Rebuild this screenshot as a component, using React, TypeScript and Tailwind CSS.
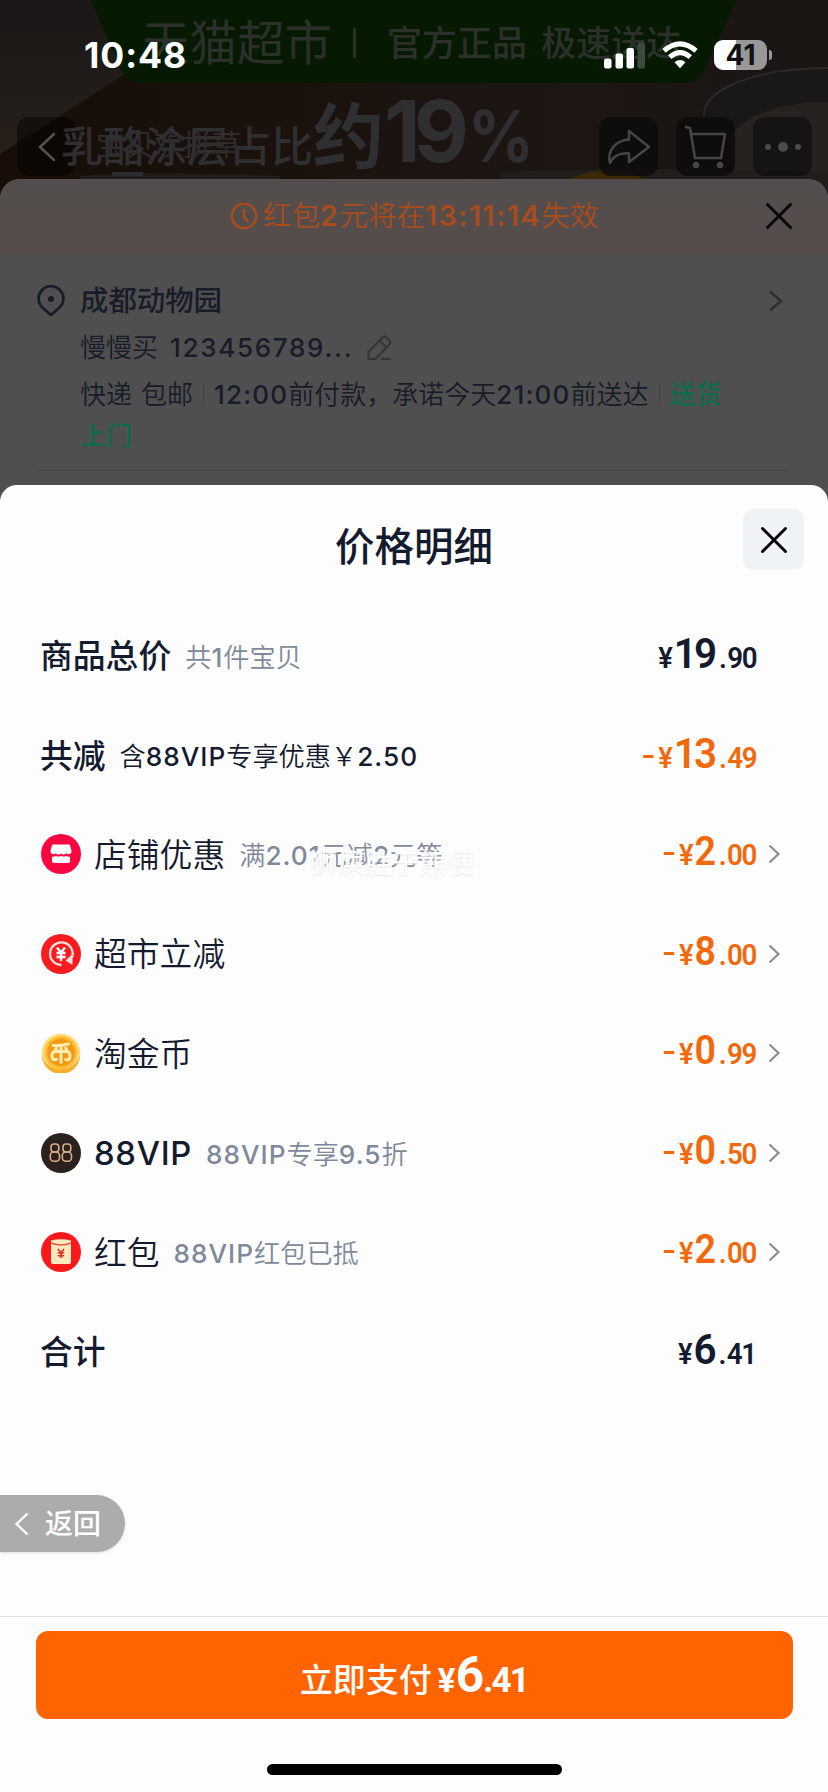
import React from 'react';

type IconName = 'shop' | 'discount' | 'coin' | 'vip' | 'redPacket';

interface PriceRow {
  label: string;
  note?: string;
  icon?: IconName;
  minus?: boolean;
  whole: string;
  cents: string;
  strong?: boolean;
  darkNote?: boolean;
  watermark?: string;
}

const rows: PriceRow[] = [
  { label: '商品总价', note: '共1件宝贝', whole: '19', cents: '90', strong: true },
  { label: '共减', note: '含88VIP专享优惠￥2.50', minus: true, whole: '13', cents: '49', strong: true, darkNote: true },
  { label: '店铺优惠', note: '满2.01元减2元等', icon: 'shop', minus: true, whole: '2', cents: '00', watermark: '狮屎胜于熊便' },
  { label: '超市立减', icon: 'discount', minus: true, whole: '8', cents: '00' },
  { label: '淘金币', icon: 'coin', minus: true, whole: '0', cents: '99' },
  { label: '88VIP', note: '88VIP专享9.5折', icon: 'vip', minus: true, whole: '0', cents: '50' },
  { label: '红包', note: '88VIP红包已抵', icon: 'redPacket', minus: true, whole: '2', cents: '00' },
  { label: '合计', whole: '6', cents: '41', strong: true },
];

// Splits out latin runs so that they can be heavier than the hanzi around them
const Mixed: React.FC<{ text: string; latin?: string }> = ({ text, latin = 'font-medium tracking-[1px]' }) => (
  <>
    {text.split(/([0-9A-Za-z:.]+)/).map((part, i) =>
      i % 2 ? (
        <span key={i} className={latin}>
          {part}
        </span>
      ) : (
        part
      ),
    )}
  </>
);

const Cross: React.FC = () => (
  <svg className="h-7 w-7" viewBox="0 0 28 28" fill="none" stroke="#05060a" strokeWidth="3" strokeLinecap="round">
    <path d="M2.5 2.5 25.5 25.5M25.5 2.5 2.5 25.5" />
  </svg>
);

const RowIcon: React.FC<{ name: IconName }> = ({ name }) => {
  switch (name) {
    case 'shop':
      return (
        <svg className="h-10 w-10" viewBox="0 0 40 40">
          <circle cx="20" cy="20" r="20" fill="#fb0640" />
          <path
            d="M12.500 10.500h15c.9 0 1.500.5 1.700 1.300l1.300 5.200c.4 2.800-3.300 4.600-5.300 2.300-1.300 1.900-4 1.900-5.200 0-1.300 1.900-4 1.900-5.200 0-2 2.300-5.700.5-5.300-2.300l1.300-5.200c.2-.8.8-1.300 1.700-1.300Z"
            fill="#fff"
          />
          <path
            d="M11 22.500c1.400.4 2.700.1 3.800-.8 1.500 1.200 3.700 1.200 5.200 0 1.500 1.200 3.700 1.200 5.200 0 1.100.9 2.400 1.200 3.800.8v4.600c0 1.300-.7 2-2 2h-14c-1.300 0-2-.7-2-2Z"
            fill="#fff"
          />
        </svg>
      );
    case 'discount':
      return (
        <svg className="h-10 w-10" viewBox="0 0 40 40" fill="none">
          <circle cx="20" cy="20" r="20" fill="#f81b20" />
          <path d="M20.500 31A11.300 11.300 0 1 1 31 23.500" stroke="#ffe1dd" strokeWidth="2.300" />
          <path d="M31.500 20V31L24.500 26.500Z" fill="#ffe1dd" />
          <path d="M16 13.500 20 18.500 24 13.500M20 18.500V27M15.500 19h9M15.500 23h9" stroke="#fff" strokeWidth="2.400" />
        </svg>
      );
    case 'coin':
      return (
        <svg className="h-10 w-10" viewBox="0 0 40 40" fill="none">
          <circle cx="20" cy="20" r="19.300" fill="#ffdc7c" />
          <path d="M1 22a19.300 17.500 0 0 0 38 0A19 19 0 0 1 1 22Z" fill="#f8ad2a" />
          <circle cx="20" cy="19.500" r="16.500" fill="#ffbd35" />
          <circle cx="20" cy="19.500" r="13.800" fill="#f39a12" />
          <path
            d="M12 12.500q8 .3 15.500-1.500M12 26.500c-2.500-4.500-.5-8 3-8h10c3.500 0 5.500 3.500 3 8q-1.500.8-3.300 0M20 13v16.500M15.500 26.300q-2 .9-3.500.2M13.500 18l2-3M26.500 18l-2-3"
            stroke="#ffedb4"
            strokeWidth="2.900"
            strokeLinecap="round"
          />
        </svg>
      );
    case 'vip':
      return (
        <svg className="h-10 w-10" viewBox="0 0 40 40" fill="none" stroke="#d9ae84" strokeWidth="1.600">
          <circle cx="20" cy="20" r="20" fill="#2b211e" stroke="none" />
          <rect x="10" y="11" width="7.800" height="8" rx="3" />
          <rect x="9.300" y="19" width="9.200" height="9.300" rx="3.500" />
          <rect x="22" y="11" width="7.800" height="8" rx="3" />
          <rect x="21.300" y="19" width="9.200" height="9.300" rx="3.500" />
        </svg>
      );
    default:
      return (
        <svg className="h-10 w-10" viewBox="0 0 40 40" fill="none">
          <circle cx="20" cy="20" r="20" fill="#f9191d" />
          <path d="M10 8.500q10-2.500 20 0v21.500q0 2-2 2h-16q-2 0-2-2Z" fill="#ffe9bd" />
          <path d="M10 11q10 4 20 0" stroke="#e8523d" strokeWidth="1.500" />
          <path d="M17 17l3 4 3-4M20 21v5M16.800 21h6.400M16.800 23.800h6.400" stroke="#e02b24" strokeWidth="1.600" />
        </svg>
      );
  }
};

const Amount: React.FC<{ row: PriceRow }> = ({ row }) => (
  <div
    className={`flex origin-right -translate-y-0.5 scale-x-[0.94] items-baseline font-['Roboto','Noto_Sans_CJK_SC',sans-serif] font-semibold leading-none ${
      row.minus ? 'text-[#f2690d]' : 'text-[#151b2e]'
    }`}
  >
    {row.minus && <span className="mr-[5px] h-[3px] w-[11px] -translate-y-[10px] bg-[#f2690d]" />}
    <span className="mr-0.5 text-[29px] tracking-[-1px]">¥</span>
    <span className={row.strong ? 'text-[43px] tracking-[-3px]' : 'text-[40px] tracking-[-2px]'}>{row.whole}</span>
    <span className="ml-[5px] text-[29.500px] tracking-[-1.500px]">
      <span className="mr-0.5">.</span>
      {row.cents}
    </span>
  </div>
);

const Row: React.FC<{ row: PriceRow }> = ({ row }) => (
  <div className="flex h-[99.400px] items-center pl-[41px] pr-[46px]">
    {row.icon && (
      <span className="mr-[13px]">
        <RowIcon name={row.icon} />
      </span>
    )}
    <span
      className={`translate-y-px text-[32.800px] leading-none text-[#151b2e] ${
        row.icon ? 'font-[350]' : '-ml-px font-medium'
      }`}
    >
      <Mixed text={row.label} latin="font-medium tracking-[0.7px]" />
    </span>
    {row.note && (
      <span
        className={`relative ml-3.5 translate-y-0.5 whitespace-nowrap text-[26.200px] font-[350] leading-none ${
          row.darkNote ? 'text-[#151b2e]' : 'text-[#7f899c]'
        }`}
      >
        <Mixed text={row.note} />
        {row.watermark && (
          <span className="absolute left-[71px] top-[7px] text-[27.300px] font-normal text-white [text-shadow:0_1px_2px_#e3e4e8]">
            {row.watermark}
          </span>
        )}
      </span>
    )}
    <div className="ml-auto flex items-center">
      <Amount row={row} />
      <svg className="ml-3 h-5 w-3.5" viewBox="0 0 14 20" fill="none" stroke="#8b8d92" strokeWidth="2.200">
        {row.icon && <path d="M1.500 1.500 10.500 10 1.500 18.500" />}
      </svg>
    </div>
  </div>
);

const Hero: React.FC = () => (
  <div className="relative h-[200px] w-full shrink-0 overflow-hidden bg-[#17110e]">
    <svg className="absolute inset-0 h-full w-full" viewBox="0 0 828 200" fill="none">
      <defs>
        <linearGradient id="wood" x1="0" y1="0" x2="0" y2="1">
          <stop offset="0" stopColor="#1b1716" />
          <stop offset="1" stopColor="#27201b" />
        </linearGradient>
        <linearGradient id="shade" x1="0" y1="0" x2="1" y2="0">
          <stop offset="0" stopColor="#180d07" />
          <stop offset="0.700" stopColor="#1d1613" />
          <stop offset="1" stopColor="#1a1614" />
        </linearGradient>
      </defs>
      <path d="M0 0h828v200H0Z" fill="url(#shade)" />
      <path d="M0 0h150v58L0 154Z" fill="url(#wood)" />
      <path d="M91 0h646l-32 68q-6 15-22 15H143q-17 0-22-15Z" fill="#061a02" />
      <path d="M704 112c6-25 50-45 124-45v133H718Z" fill="#1a1816" />
      <path d="M704 118c-4-28 50-50 124-50" stroke="#2b2927" strokeWidth="2" />
      <path d="M728 140c15-25 50-38 100-38v98H740Z" fill="#25221f" />
      <path d="M80 176q60-5 200 0v24H80ZM500 172q100-6 328 0v28H500Z" fill="#211d1b" />
      <path d="M570 179q40-18 74 0Z" fill="#3a2809" />
      <path d="M112 172h31v4h-31Z" fill="#292c31" />
    </svg>
    <div className="absolute left-[142px] top-[19px] flex items-center whitespace-nowrap text-[35px] font-medium leading-[48px] text-[#2b302b]">
      <span className="text-[47.500px] font-normal">天猫超市</span>
      <span className="ml-[21px] h-[30px] w-[3px] bg-[#2b302b]" />
      <span className="ml-[31px]">官方正品</span>
      <span className="ml-[14px]">极速送达</span>
    </div>
    <div className="absolute left-[17px] top-[117px] h-[59px] w-[58px] rounded-xl bg-black/45" />
    <div className="absolute left-[61px] top-[94px] flex items-baseline whitespace-nowrap leading-[76px] text-[#2f2e30]">
      <span className="text-[42px] font-medium">乳酪涂层占比</span>
      <span className="text-[71px] font-bold">约</span>
      <span className="text-[85px] font-bold tracking-[-7px]">19</span>
      <span className="ml-1.5 origin-left scale-x-90 text-[72px] font-bold">%</span>
    </div>
    <span className="absolute left-24 top-[131px] whitespace-nowrap text-[29px] leading-none text-[#2e2c2c]">宝贝欢拼草</span>
    <svg className="absolute left-9 top-[131px] h-8 w-5" viewBox="0 0 20 32" fill="none" stroke="#57514f" strokeWidth="2.500" strokeLinecap="round">
      <path d="M18 3 4 16 18 29" />
    </svg>
    <div className="absolute left-[599px] top-[117px] flex gap-[18px]">
      <span className="flex h-[59px] w-[59px] items-center justify-center rounded-xl bg-[#0c0a0b]/80">
        <svg className="h-[42px] w-[46px]" viewBox="0 0 46 42" fill="none" stroke="#484546" strokeWidth="2.500" strokeLinejoin="round">
          <path d="M23 5 43 21 23 36V27.500C12 26.500 7 31 4 37 1 25 9 14.500 23 13.500Z" />
        </svg>
      </span>
      <span className="flex h-[59px] w-[59px] items-center justify-center rounded-xl bg-[#0c0a0b]/80">
        <svg className="h-[44px] w-[44px]" viewBox="0 0 44 44" fill="none" stroke="#484546" strokeWidth="2.500" strokeLinejoin="round" strokeLinecap="round">
          <path d="M2 2 6 3 11 33H37L41 9H7.500" />
          <circle cx="12" cy="40" r="2" fill="#484546" />
          <circle cx="36" cy="40" r="2" fill="#484546" />
        </svg>
      </span>
      <span className="flex h-[59px] w-[59px] items-center justify-center gap-[7px] rounded-xl bg-[#0c0a0b]/60">
        <i className="h-1.5 w-1.5 rounded-full bg-[#4c494a]" />
        <i className="h-2.5 w-2.5 rounded-full bg-[#4c494a]" />
        <i className="h-1.5 w-1.5 rounded-full bg-[#4c494a]" />
      </span>
    </div>
  </div>
);

const StatusBar: React.FC = () => (
  <div className="absolute left-0 top-0 flex h-[110px] w-full items-center pl-[84px] pr-[56px] text-white">
    <span className="translate-y-px text-[35.500px] font-bold leading-none tracking-[1px]">10:48</span>
    <svg className="ml-auto h-7 w-[42px]" viewBox="0 0 42 28" fill="#fff">
      <rect x="0" y="17.500" width="7.500" height="10" rx="2" />
      <rect x="11.500" y="12.500" width="7.500" height="15" rx="2" />
      <rect x="22.500" y="7" width="7.500" height="20.500" rx="2" />
      <rect x="33.500" y="1.500" width="7.500" height="26" rx="2" fill="#3c4a3c" />
    </svg>
    <svg className="ml-4 h-7 w-9" viewBox="0 0 36 28" fill="none" stroke="#fff" strokeWidth="5">
      <path d="M2 9.800Q18-4 34 9.800" />
      <path d="M7.700 16.200Q18 7.200 28.300 16.200" />
      <path d="M12.500 21.300Q18 16.500 23.500 21.300L18 27.300Z" fill="#fff" stroke="none" />
    </svg>
    <div className="ml-4 flex items-center">
      <span className="flex h-[30px] w-[53px] items-center justify-center rounded-[9px] bg-[linear-gradient(90deg,#fff_42%,#989898_42%)] text-[28px] font-bold leading-none text-[#111]">
        41
      </span>
      <span className="ml-0.5 h-2.5 w-[3px] rounded-r-full bg-[#989898]" />
    </div>
  </div>
);

const OrderSheet: React.FC = () => (
  <div className="z-[1] -mt-[21px] h-[306px] shrink-0 overflow-hidden rounded-t-[20px] bg-[#4f4f4f] font-[350] text-[#171b2a]">
    <div className="flex h-[75px] items-center bg-gradient-to-b from-[#524d4c] to-[#564d4b] pr-[35px]">
      <svg className="ml-[230px] h-7 w-7" viewBox="0 0 28 28" fill="none" stroke="#a84c1e" strokeWidth="2.500" strokeLinecap="round">
        <circle cx="14" cy="13" r="12.300" />
        <path d="M14 7v7l3.500 4" />
      </svg>
      <span className="ml-[5px] whitespace-nowrap text-[28.500px] leading-none text-[#a84c1e]">
        <Mixed text="红包2元将在13:11:14失效" latin="font-semibold tracking-[1.600px]" />
      </span>
      <span className="-mt-0.5 ml-auto">
        <Cross />
      </span>
    </div>
    <div className="mx-[37px] mt-[25px] flex h-[192px] border-b border-[#454545]">
      <svg className="mt-1.5 h-8 w-[28px]" viewBox="0 0 28 32" fill="none" stroke="#171b2a" strokeWidth="2.700" strokeLinejoin="round">
        <path d="M14 30 6.500 23.500A12.400 12.400 0 1 1 21.500 23.500Z" />
        <circle cx="14" cy="14" r="3" fill="#171b2a" stroke="none" />
      </svg>
      <div className="ml-[15px] flex flex-col whitespace-nowrap text-[26px]">
        <span className="text-[28.400px] font-medium leading-[44px]">成都动物园</span>
        <div className="mt-[3px] flex items-center leading-[44px]">
          慢慢买
          <span className="ml-3 font-medium tracking-[1.700px]">123456789...</span>
          <svg className="ml-[14px] h-[26px] w-[25px]" viewBox="0 0 25 26" fill="none" stroke="#353638" strokeWidth="2.200" strokeLinejoin="round">
            <path d="M1.500 24V17L15.500 2.500Q17.500.8 19.500 2.500L22.500 5.500Q24 7.500 22.500 9.500L8.500 24ZM13 6l7 7M14 24h10" />
          </svg>
        </div>
        <div className="mt-[3px] flex items-center leading-[44px]">
          快递
          <span className="ml-[9px]">包邮</span>
          <i className="mx-[10px] h-[22px] w-px bg-[#3f4044]" />
          <span>
            <Mixed text="12:00前付款，承诺今天21:00前送达" latin="font-medium tracking-[1.200px]" />
          </span>
          <i className="mx-[10px] h-[22px] w-px bg-[#3f4044]" />
          <span className="font-medium text-[#0d6b4d]">送货</span>
        </div>
        <span className="font-medium leading-[38px] text-[#0d6b4d]">上门</span>
      </div>
      <svg className="ml-auto mr-2 mt-[11px] h-[22px] w-[16px]" viewBox="0 0 16 22" fill="none" stroke="#2f3033" strokeWidth="2.500">
        <path d="M3 1.500 14 11 3 20.500" />
      </svg>
    </div>
  </div>
);

const App: React.FC = () => {
  return (
    <div className="relative flex h-[1792px] w-[828px] flex-col overflow-hidden bg-[#4f4f4f] font-['Inter','Noto_Sans_CJK_SC',sans-serif]">
      <Hero />
      <OrderSheet />
      <StatusBar />
      <section className="flex grow flex-col rounded-t-[17px] bg-[#fdfdfd]">
        <header className="grid h-[121px] shrink-0 grid-cols-[1fr_auto_1fr] items-start">
          <h1 className="col-start-2 mt-[42px] text-[39.500px] font-medium leading-[40px] text-[#151b2e]">价格明细</h1>
          <button className="mr-6 mt-6 flex h-[61px] w-[61px] items-center justify-center justify-self-end rounded-[10px] bg-[#eff3f6]">
            <Cross />
          </button>
        </header>
        {rows.map((row) => (
          <Row key={row.label} row={row} />
        ))}
        <button className="mt-[94px] flex h-[57px] w-[125px] items-center rounded-r-full bg-[#acacac] pl-3.5 text-[28px] text-white shadow-sm">
          <svg className="h-6 w-4" viewBox="0 0 16 24" fill="none" stroke="#fff" strokeWidth="2.300">
            <path d="M13.500 1.500 2.500 12 13.500 22.500" />
          </svg>
          <span className="ml-[15px] whitespace-nowrap font-medium leading-none">返回</span>
        </button>
        <footer className="mt-16 flex grow flex-col items-center border-t border-[#e2e3e1] pt-3.5">
          <button className="flex h-[88px] w-[757px] items-baseline justify-center rounded-xl bg-[#ff6401] pt-[19px] font-['Roboto','Noto_Sans_CJK_SC',sans-serif] font-bold leading-none text-white">
            <span className="text-[33px] font-medium">立即支付</span>
            <span className="ml-1.5 text-[33px]">¥</span>
            <span className="text-[50px] tracking-[-1px]">6</span>
            <span className="text-[35px] tracking-[-1.800px]">.41</span>
          </button>
          <div className="mt-[45px] h-[11px] w-[295px] rounded-full bg-black" />
        </footer>
      </section>
    </div>
  );
};

export default App;
